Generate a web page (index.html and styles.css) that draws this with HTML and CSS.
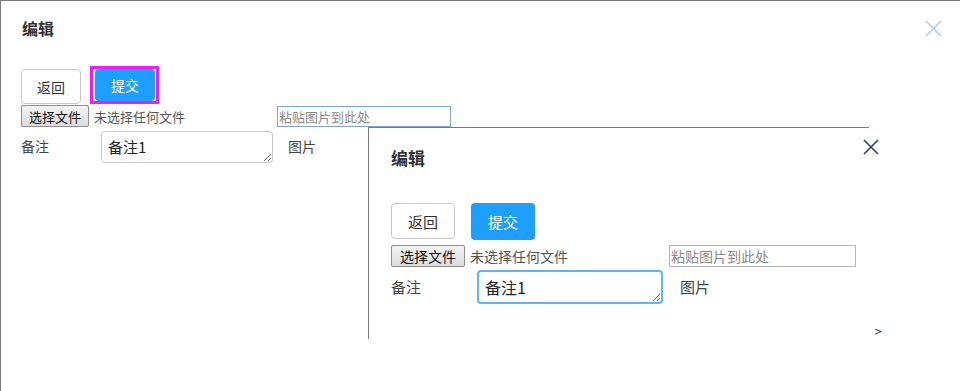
FILE: index.html
```html
<!DOCTYPE html>
<html>
<head>
<meta charset="utf-8">
<title>编辑</title>
<link rel="stylesheet" href="styles.css">
</head>
<body>
<div class="page">
	<div class="dlg">
		<div class="dlg-hd">编辑<span class="dlg-close"><svg width="17" height="17" viewBox="0 0 17 17"><path d="M1 1L16 16M16 1L1 16" stroke="#b9cbe0" stroke-width="1.6" fill="none"/></svg></span></div>
		<div class="ops">
			<button class="btn btn-back">返回</button>
			<span class="picked"><button class="btn btn-ok">提交</button></span>
		</div>
		<div class="file-row">
			<span class="file"><button class="file-btn">选择文件</button><span class="file-txt">未选择任何文件</span></span>
			<input class="paste" placeholder="粘贴图片到此处">
		</div>
		<div class="form-row">
			<label class="lbl">备注</label>
			<textarea class="remark">备注1</textarea>
			<span class="lbl-pic">图片</span>
		</div>
	</div>

	<!-- 截图预览 -->
	<div class="shot">
		<div class="dlg-hd">编辑<span class="dlg-close"><svg width="16" height="16" viewBox="0 0 16 16"><path d="M1 1L15 15M15 1L1 15" stroke="#3a4250" stroke-width="1.6" fill="none"/></svg></span></div>
		<div class="ops">
			<button class="btn btn-back">返回</button>
			<button class="btn btn-ok">提交</button>
		</div>
		<div class="file-row">
			<span class="file"><button class="file-btn">选择文件</button><span class="file-txt">未选择任何文件</span></span>
			<input class="paste" placeholder="粘贴图片到此处">
		</div>
		<div class="form-row">
			<label class="lbl">备注</label>
			<textarea class="remark focus">备注1</textarea>
			<span class="lbl-pic">图片</span>
		</div>
		<span class="more">&gt;</span>
	</div>
</div>
</body>
</html>
```

FILE: styles.css
```css
*{margin:0;padding:0;box-sizing:border-box;}
body{background:#fff;font-family:"Noto Sans CJK SC","Microsoft YaHei",sans-serif;color:#333;}

.page{position:relative;width:960px;height:391px;border-top:1px solid #7b7b7b;border-left:1px solid #7b7b7b;overflow:hidden;}

/** 弹窗 **/
.dlg-hd{position:relative;height:54px;line-height:54px;padding-left:21px;font-size:16px;font-weight:bold;color:#333;}
.dlg-close{position:absolute;right:18px;top:19px;width:17px;height:17px;line-height:0;}
.dlg-close svg{display:block;}

.ops{display:flex;align-items:flex-start;gap:14px;margin-top:14px;padding-left:20px;}
.btn{width:60px;height:35px;border-radius:4px;font-family:inherit;font-size:14px;cursor:pointer;}
.btn-back{background:#fff;border:1px solid #c9c9c9;color:#333;}
.btn-ok{height:32px;background:#1e9fff;border:0;color:#fff;}
.picked{display:flex;margin:-3px 0 0 -5px;padding:0 1px 0 2px;border:3px solid #f31cf0;}

.file-row{display:flex;align-items:center;margin-top:1px;padding-left:20px;}
.file{display:flex;align-items:center;width:256px;font-size:13px;}
.file-btn{width:68px;height:22px;border:1px solid #8f8f8f;border-radius:2px;background:linear-gradient(#f4f4f4,#dcdcdc);font-family:inherit;font-size:13px;color:#111;}
.file-txt{margin-left:5px;color:#555;}
.paste{width:174px;height:21px;border:1px solid #7fa3e3;padding:0 1px;font-family:inherit;font-size:13px;outline:0;}
.paste::placeholder{color:#8a8a8a;}

.form-row{display:flex;align-items:flex-start;margin-top:4px;padding-left:20px;}
.lbl{width:80px;line-height:30px;font-size:14px;color:#444;}
.remark{width:172px;height:32px;border:1px solid #c9c9c9;border-radius:4px;padding:4px 6px;font-family:inherit;font-size:15px;color:#222;line-height:22px;outline:0;}
.lbl-pic{margin-left:15px;line-height:30px;font-size:14px;color:#444;}

/** 截图 **/
.shot{position:absolute;left:367px;top:126px;width:530px;height:212px;border-left:1px solid #7b7b7b;background:#fff;}
.shot:before{content:'';position:absolute;left:0;top:0;width:500px;border-top:1px solid #7b7b7b;}
.shot .dlg-hd{height:61px;line-height:62px;padding-left:22px;font-size:17px;}
.shot .dlg-close{right:19px;top:12px;width:16px;height:16px;}
.shot .ops{gap:16px;margin-top:15px;padding-left:22px;}
.shot .btn{width:64px;height:36px;font-size:15px;}
.shot .btn-ok{height:37px;}
.shot .file-row{margin-top:5px;padding-left:22px;}
.shot .file{width:278px;font-size:14px;}
.shot .file-btn{width:74px;height:22px;font-size:14px;}
.shot .paste{width:187px;height:22px;border:1px solid #b5b5b5;font-size:14px;}
.shot .form-row{margin-top:3px;padding-left:22px;}
.shot .lbl{width:86px;line-height:34px;font-size:15px;}
.shot .remark{width:186px;height:34px;font-size:16px;line-height:24px;}
.shot .remark.focus{border:2px solid #5db5ff;padding:3px 6px;}
.shot .lbl-pic{margin-left:17px;line-height:34px;font-size:15px;}
.more{position:absolute;left:505px;top:199px;font-size:10px;color:#2a3550;font-family:"DejaVu Sans",sans-serif;}
```
